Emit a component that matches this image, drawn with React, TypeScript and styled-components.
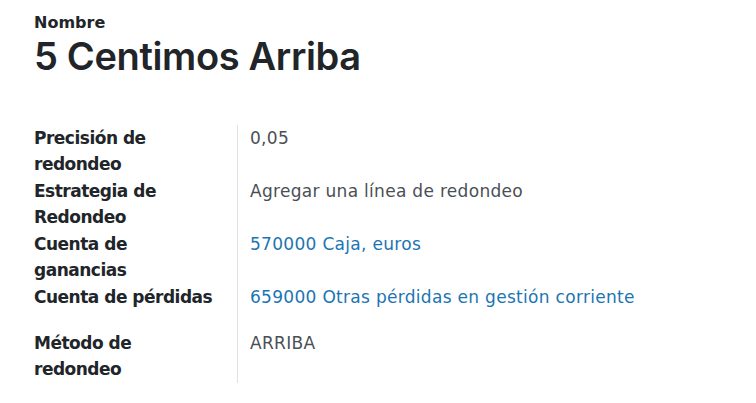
import React from "react";
import styled, { createGlobalStyle } from "styled-components";

const GlobalStyle = createGlobalStyle`
  html, body { margin: 0; padding: 0; background: #ffffff; }
  body { font-family: "DejaVu Sans", "Noto Sans", sans-serif; }
`;

const Sheet = styled.main`
  padding: 13px 34px 0 34px;
  display: flex;
  flex-direction: column;
`;

const TitleBlock = styled.header`
  display: flex;
  flex-direction: column;
  margin-bottom: 46px;
`;

const FieldCaption = styled.div`
  font-family: "DejaVu Sans", sans-serif;
  font-weight: 700;
  font-size: 16px;
  line-height: 20px;
  color: #212529;
`;

const RecordName = styled.h1`
  margin: 0;
  font-family: Inter, "DejaVu Sans", sans-serif;
  font-weight: 600;
  font-size: 38px;
  line-height: 46px;
  letter-spacing: -0.35px;
  color: #212529;
`;

const FieldGrid = styled.div`
  display: grid;
  grid-template-columns: 203px 1fr;
  row-gap: 0;
`;

const Label = styled.div`
  font-family: "DejaVu Sans", sans-serif;
  font-weight: 700;
  font-size: 17px;
  line-height: 26px;
  letter-spacing: -0.5px;
  color: #212529;
  padding-right: 20px;
  padding-bottom: 1px;
  min-height: 45px;
`;

const Value = styled.div<{ $link?: boolean }>`
  font-family: "DejaVu Sans", sans-serif;
  font-weight: 400;
  font-size: 17px;
  line-height: 26px;
  letter-spacing: 0.3px;
  color: ${(p) => (p.$link ? "#1b75b3" : "#4a4f55")};
  border-left: 1px solid #dee2e6;
  padding-left: 12px;
  white-space: nowrap;
`;

const rows: { label: string; value: string; link?: boolean }[] = [
  { label: "Precisión de redondeo", value: "0,05" },
  { label: "Estrategia de Redondeo", value: "Agregar una línea de redondeo" },
  { label: "Cuenta de ganancias", value: "570000 Caja, euros", link: true },
  { label: "Cuenta de pérdidas", value: "659000 Otras pérdidas en gestión corriente", link: true },
  { label: "Método de redondeo", value: "ARRIBA" },
];

export default function App() {
  return (
    <Sheet>
      <GlobalStyle />
      <TitleBlock>
        <FieldCaption>Nombre</FieldCaption>
        <RecordName>5 Centimos Arriba</RecordName>
      </TitleBlock>
      <FieldGrid>
        {rows.map((r) => (
          <React.Fragment key={r.label}>
            <Label>{r.label}</Label>
            <Value $link={r.link}>{r.value}</Value>
          </React.Fragment>
        ))}
      </FieldGrid>
    </Sheet>
  );
}
